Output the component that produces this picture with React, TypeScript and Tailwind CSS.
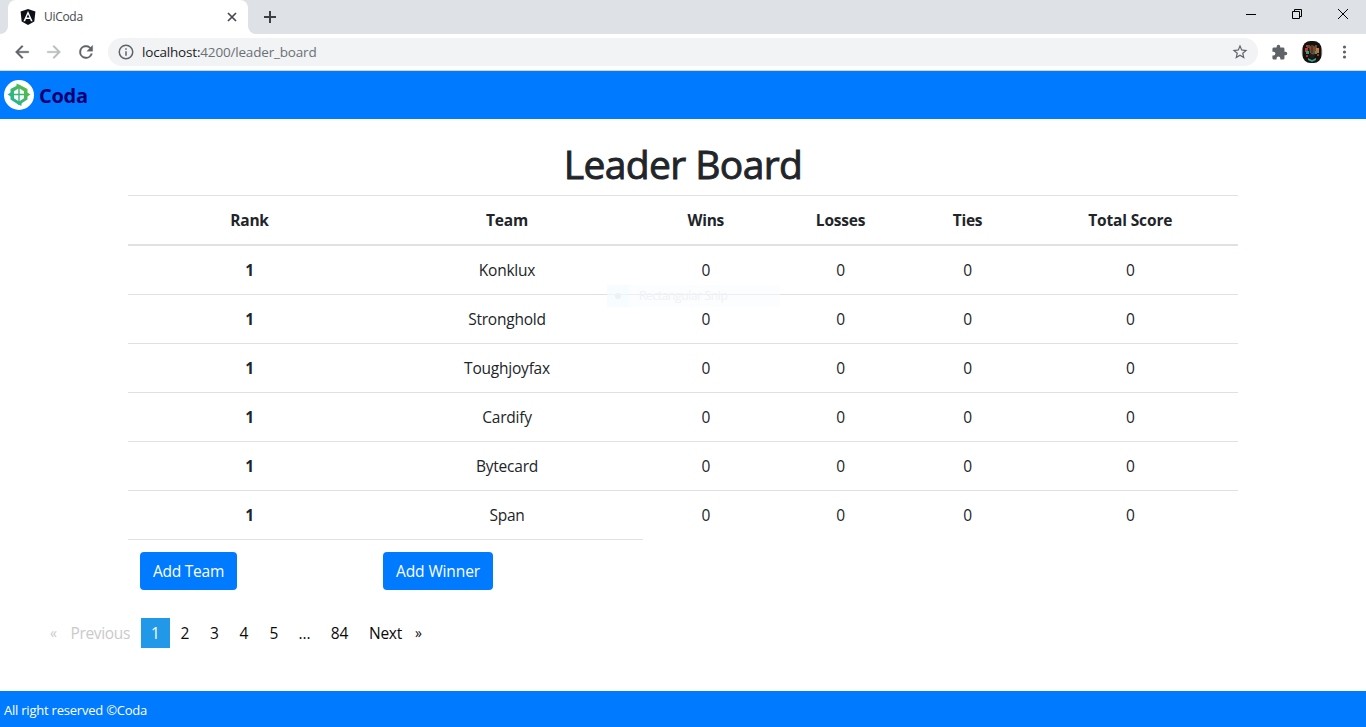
import React from "react";

const teams = ["Konklux", "Stronghold", "Toughjoyfax", "Cardify", "Bytecard", "Span"];

const columns =
  "grid grid-cols-[243px_272px_125.5px_144px_110px_215.5px] text-center";

function TabStrip() {
  return (
    <div className="flex h-[34px] bg-[#dee1e6]">
      <div className="flex w-2 items-end bg-white">
        <div className="h-full w-2 rounded-br-lg bg-[#dee1e6]" />
      </div>
      <div className="flex w-60 items-center rounded-t-lg bg-white pr-[9px] pl-3">
        <svg className="size-4" viewBox="0 0 16 16">
          <path d="M8 0l7.4 2.6-1.1 10L8 16l-6.3-3.4-1.1-10z" fill="#0d1117" />
          <path
            d="M8 2L3.4 12.2h1.7l.9-2.3h4l.9 2.3h1.7L8 2zm0 3.3l1.4 3.2H6.6z"
            fill="#fff"
          />
        </svg>
        <span className="ml-2 flex-1 text-[12px] tracking-[-0.3px] text-[#45494d]">UiCoda</span>
        <svg className="size-3.5" viewBox="0 0 14 14" stroke="#45494d" strokeWidth="1.7">
          <path d="M3 3l8 8M11 3l-8 8" />
        </svg>
      </div>
      <div className="flex w-2 bg-white">
        <div className="h-full w-2 rounded-bl-lg bg-[#dee1e6]" />
      </div>
      <svg className="mt-[10px] ml-[7px] size-3.5" viewBox="0 0 14 14" stroke="#3c4043" strokeWidth="2">
        <path d="M7 1v12M1 7h12" />
      </svg>
      <div className="ml-auto flex gap-[34px] pt-[8px] pr-[17px]">
        <svg className="size-3" viewBox="0 0 12 12" stroke="#000" fill="none">
          <path d="M1 6.5h10" />
        </svg>
        <svg className="size-3" viewBox="0 0 12 12" stroke="#000" fill="none">
          <path d="M1.500 3.500h7v7h-7zM3.500 3.500v-2h7v7h-2" />
        </svg>
        <svg className="size-3" viewBox="0 0 12 12" stroke="#000" fill="none">
          <path d="M1 1l10 10M11 1L1 11" />
        </svg>
      </div>
    </div>
  );
}

function Avatar() {
  return (
    <svg className="ml-[13px] h-[22px] w-[22px]" viewBox="0 0 22 22">
      <circle cx="11" cy="11" r="10.700" fill="#dcd8d6" />
      <rect x="1.500" y="0" width="19" height="22" rx="8" fill="#15110f" />
      <path d="M6 4h3v3H6zM14 4h2v3h-2z" fill="#5b4c3c" />
      <path d="M8 6l3-2 4 2v6l-3 2-3-2z" fill="#7a4b2f" />
      <path d="M4 7h3v4H4zM5 4h2v2H5z" fill="#c0372a" />
      <path d="M15 7h3v5h-3z" fill="#c8752c" />
      <path d="M5 10h3v3H5zM14 10h2v3h-2zM7 17l4 2 4-2v2l-4 2-4-2z" fill="#2aa096" />
      <path d="M16 13h2v2h-2zM5 14h2v2H5z" fill="#b03226" />
      <path d="M8 14h6M9 16h4M11 5v7" stroke="#302620" />
    </svg>
  );
}

function Toolbar() {
  return (
    <div className="flex h-[37px] items-center border-b border-[#d5d7db] bg-white pr-[13px] pl-3">
      <svg className="size-5" viewBox="0 0 24 24" fill="#5f6368" stroke="#5f6368" strokeWidth="0.4">
        <path d="M20 11H7.830l5.590-5.590L12 4l-8 8 8 8 1.410-1.410L7.830 13H20v-2z" />
      </svg>
      <svg className="ml-3 size-5" viewBox="0 0 24 24" fill="#babcbe" stroke="#babcbe" strokeWidth="0.4">
        <path d="M12 4l-1.410 1.410L16.170 11H4v2h12.170l-5.580 5.590L12 20l8-8z" />
      </svg>
      <svg className="ml-3 size-5" viewBox="0 0 24 24" fill="#5f6368" stroke="#5f6368" strokeWidth="0.4">
        <path d="M17.650 6.350A7.960 7.960 0 0 0 12 4a8 8 0 1 0 7.730 10h-2.080A6 6 0 1 1 12 6c1.660 0 3.140.69 4.220 1.780L13 11h7V4z" />
      </svg>
      <div className="ml-3 flex h-7 w-[1150px] items-center rounded-full bg-[#f1f3f4] pr-[9px] pl-[9px]">
        <svg className="size-[18px]" viewBox="0 0 24 24" fill="#5f6368">
          <path d="M11 7h2v2h-2zm0 4h2v6h-2zm1-9a10 10 0 1 0 0 20 10 10 0 0 0 0-20zm0 18a8 8 0 1 1 0-16 8 8 0 0 1 0 16z" />
        </svg>
        <span className="ml-[7px] text-[13.500px] tracking-[-0.18px] text-[#6c7074]">
          <span className="text-[#202124]">localhost:</span>4200/leader_board
        </span>
        <svg className="ml-auto size-[18px]" viewBox="0 0 24 24" fill="#5f6368">
          <path d="M22 9.240l-7.190-.62L12 2 9.190 8.630 2 9.240l5.460 4.730L5.820 21 12 17.270 18.180 21l-1.630-7.030zM12 15.400l-3.760 2.270 1-4.280-3.320-2.880 4.380-.38L12 6.100l1.710 4.040 4.380.38-3.320 2.880 1 4.280z" />
        </svg>
      </div>
      <svg className="ml-[13px] size-[17px]" viewBox="0 0 24 24" fill="#5f6368">
        <path d="M20.500 11H19V7a2 2 0 0 0-2-2h-4V3.500a2.500 2.500 0 0 0-5 0V5H4a2 2 0 0 0-2 2v3.800h1.500a2.700 2.700 0 0 1 0 5.400H2V20a2 2 0 0 0 2 2h3.800v-1.500a2.700 2.700 0 0 1 5.400 0V22H17a2 2 0 0 0 2-2v-4h1.500a2.500 2.500 0 0 0 0-5z" />
      </svg>
      <Avatar />
      <svg className="ml-auto h-4 w-4" viewBox="0 0 16 16" fill="#5f6368">
        <circle cx="7.500" cy="3" r="1.600" />
        <circle cx="7.500" cy="8" r="1.600" />
        <circle cx="7.500" cy="13" r="1.600" />
      </svg>
    </div>
  );
}

function Brand() {
  return (
    <header className="flex h-12 items-center bg-[#007bff] pl-1">
      <svg className="size-[30px]" viewBox="0 0 30 30">
        <defs>
          <linearGradient id="brand" x1="0" y1="1" x2="1" y2="0">
            <stop offset="0" stopColor="#16b2a6" />
            <stop offset="1" stopColor="#66bd35" />
          </linearGradient>
        </defs>
        <circle cx="15" cy="15" r="15" fill="#fff" />
        <path d="M15 4.500l8.500 4.600v10.400L15 25l-8.500-5.500V9.100z" fill="url(#brand)" />
        <path d="M3.500 14.500l4-2.500v5zM26.500 14.500l-4-2.500v5zM12.500 3.500l4 2-4 3zM17.500 26l-4-2 4-3z" fill="url(#brand)" />
        <path d="M15 8.200l5 3v7L15 21.500l-5-3.300v-7z" fill="#fff" />
        <path d="M14.300 8h1.400v14h-1.400zM10 13.800h10v1.400H10z" fill="#37b574" />
      </svg>
      <span className="ml-[5px] pt-[2px] text-[20px] leading-none font-bold tracking-[-0.3px] text-[#000074]">
        Coda
      </span>
    </header>
  );
}

function Pagination() {
  return (
    <nav className="flex h-[30px] items-center pl-[50px] text-[15.500px] leading-6 tracking-[-0.1px] text-[#0a0a0a]">
      <span className="w-[20.500px] text-[14px] text-[#cacaca]">«</span>
      <span className="w-[70.500px] tracking-[-0.35px] text-[#cacaca]">Previous</span>
      <span className="flex h-[30px] w-[29px] items-center justify-center bg-[#2199e8] text-[#fefefe]">1</span>
      <span className="w-[30px] text-center">2</span>
      <span className="w-[29px] text-center">3</span>
      <span className="w-[30px] text-center">4</span>
      <span className="w-[30px] text-center">5</span>
      <span className="w-[31px] text-center">...</span>
      <span className="w-[39px] text-center">84</span>
      <span className="w-[46px] pl-[10px] tracking-[-0.25px]">Next</span>
      <span className="pl-[10px] text-[14px]">»</span>
    </nav>
  );
}

export default function App() {
  return (
    <div className="flex h-[727px] w-[1366px] flex-col overflow-hidden bg-white font-['Open_Sans','Noto_Sans',sans-serif] text-[#212529]">
      <TabStrip />
      <Toolbar />
      <Brand />
      <main className="relative flex-1">
        <h1 className="h-[76px] pt-[21px] text-center text-[39px] leading-[48px] font-medium tracking-[-0.6px] [-webkit-text-stroke:0.9px_#212529]">
          Leader Board
        </h1>
        <div className="mx-auto w-[1110px] text-[15.500px] leading-6 tracking-[-0.22px]">
          <div className={`${columns} h-[51px] border-t border-b-2 border-[#dee2e6] pt-3 font-bold`}>
            <span>Rank</span>
            <span>Team</span>
            <span>Wins</span>
            <span>Losses</span>
            <span>Ties</span>
            <span className="tracking-[-0.15px]">Total Score</span>
          </div>
          <div className="divide-y divide-[#dee2e6]">
            {teams.map((team) => (
              <div key={team} className={`${columns} box-content h-9 pt-3`}>
                <span className="font-bold">1</span>
                <span>{team}</span>
                <span>0</span>
                <span>0</span>
                <span>0</span>
                <span>0</span>
              </div>
            ))}
          </div>
          <div className="flex h-[79px] w-[515px] border-t border-[#dee2e6] pt-3 pl-3">
            <div className="w-[243px]">
              <button className="h-[38px] w-[97px] rounded bg-[#007bff] text-white">Add Team</button>
            </div>
            <button className="h-[38px] w-[110px] rounded bg-[#007bff] tracking-[-0.12px] text-white">
              Add Winner
            </button>
          </div>
        </div>
        <Pagination />
        <div className="absolute top-[166px] left-[607px] flex h-[22px] w-[173px] items-center bg-[#f8fbff]/50 text-[12px] text-[#f0f2f5]">
          <span className="flex h-full w-[22px] items-center justify-center bg-[#f1f9ff]/40">
            <span className="size-1.5 rounded-full bg-[#eef0f3]" />
          </span>
          <span className="pl-[10px] tracking-[-0.35px]">Rectangular Snip</span>
        </div>
      </main>
      <footer className="flex h-9 items-center bg-[#007bff] pt-[3px] pl-1 text-[13px] tracking-[-0.22px] text-white">
        All right reserved ©Coda
      </footer>
    </div>
  );
}
